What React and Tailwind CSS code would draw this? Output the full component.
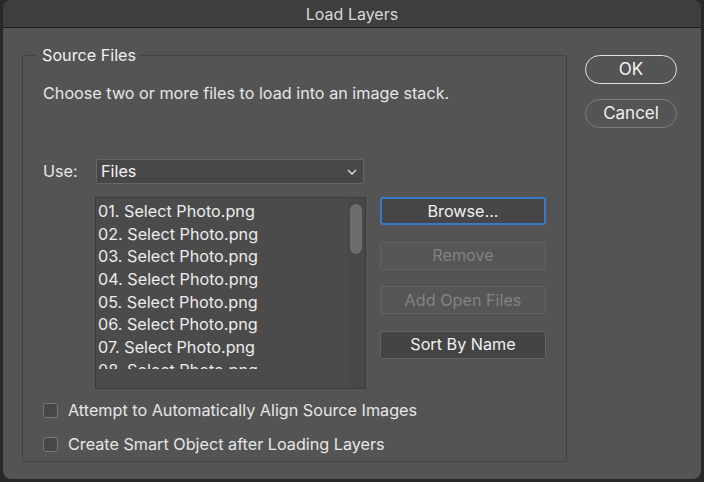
import React from "react";

const files = [
  "01. Select Photo.png",
  "02. Select Photo.png",
  "03. Select Photo.png",
  "04. Select Photo.png",
  "05. Select Photo.png",
  "06. Select Photo.png",
  "07. Select Photo.png",
  "08. Select Photo.png",
];

const ActionButton = ({ label, variant }) => {
  const styles = {
    focus: "border-2 border-[#3b78c8] bg-[#464646] text-[#f0f0f0]",
    disabled: "border border-[#626262] bg-[#565656] text-[#828282]",
    normal: "border border-[#636363] bg-[#444444] text-[#f0f0f0]",
  };
  return (
    <button
      className={`h-[28px] w-[166px] rounded-[3px] text-[16.2px] leading-none ${styles[variant]}`}
    >
      {label}
    </button>
  );
};

const Checkbox = ({ label }) => (
  <label className="flex h-[20px] items-center gap-[10px]">
    <span className="h-[15px] w-[15px] rounded-[3px] border border-[#777] bg-[#474747]" />
    <span className="text-[16.2px] leading-[20px] text-[#e6e6e6]">{label}</span>
  </label>
);

export default function App() {
  return (
    <div
      className="h-[482px] w-[704px] bg-[#2a2727] pl-[3px]"
      style={{ fontFamily: 'Inter, "Liberation Sans", Arial, sans-serif' }}
    >
      <div className="flex h-[479px] w-[698px] flex-col overflow-hidden rounded-[8px] bg-[#545454]">
        {/* title bar */}
        <div className="flex h-[28px] shrink-0 items-center justify-center border-b border-[#1c1c1c] bg-[#3d3e3e] text-[16px] text-[#d8d8d8]">
          Load Layers
        </div>

        <div className="flex flex-1">
          {/* Source Files group */}
          <fieldset className="ml-[19px] mt-[17px] h-[417px] w-[544px] rounded-[2px] border border-[#434343] px-[20px] pb-0">
            <legend className="-ml-[6px] px-[5px] text-[16.2px] leading-[20px] text-[#f0f0f0]">
              Source Files
            </legend>
            <p className="mt-[18px] text-[16.2px] leading-[20px] text-[#e6e6e6]">
              Choose two or more files to load into an image stack.
            </p>

            <div className="mt-[56px] flex items-center">
              <span className="w-[53px] text-[16.2px] text-[#e6e6e6]">Use:</span>
              <div className="flex h-[25px] w-[268px] items-center justify-between rounded-[2px] border border-[#666] bg-[#474747] pl-[4px] pr-[6px]">
                <span className="text-[16.2px] text-[#f2f2f2]">Files</span>
                <svg width="10" height="6" viewBox="0 0 10 6" fill="none">
                  <path d="M1 1l4 4 4-4" stroke="#dcdcdc" strokeWidth="1.4" />
                </svg>
              </div>
            </div>

            <div className="mt-[13px] flex gap-[14px]">
              <div className="ml-[52px] flex h-[192px] w-[271px] border border-[#3c3c3c] bg-[#4b4b4b]">
                <div className="flex-1 overflow-hidden">
                  <div className="h-[171px] overflow-hidden pl-[2px] pt-[2px]">
                    {files.map((f) => (
                      <div
                        key={f}
                        className="h-[22.7px] whitespace-nowrap text-[16.2px] leading-[22px] text-[#ececec]"
                      >
                        {f}
                      </div>
                    ))}
                  </div>
                </div>
                <div className="w-[18px] bg-[#484848] pt-[6px]">
                  <div className="mx-auto h-[50px] w-[12px] rounded-full bg-[#6c6c6c]" />
                </div>
              </div>

              <div className="flex flex-col gap-[16.5px]">
                <ActionButton label="Browse..." variant="focus" />
                <ActionButton label="Remove" variant="disabled" />
                <ActionButton label="Add Open Files" variant="disabled" />
                <ActionButton label="Sort By Name" variant="normal" />
              </div>
            </div>

            <div className="mt-[11px] flex flex-col gap-[14px]">
              <Checkbox label="Attempt to Automatically Align Source Images" />
              <Checkbox label="Create Smart Object after Loading Layers" />
            </div>
          </fieldset>

          {/* OK / Cancel */}
          <div className="ml-[18px] mt-[27px] flex flex-col gap-[15px]">
            <button className="h-[29px] w-[92px] rounded-full border-[1.5px] border-[#e2e2e2] text-[17px] text-[#f4f4f4]">
              OK
            </button>
            <button className="h-[29px] w-[92px] rounded-full border border-[#7c7c7c] text-[17px] text-[#eeeeee]">
              Cancel
            </button>
          </div>
        </div>
      </div>
    </div>
  );
}
